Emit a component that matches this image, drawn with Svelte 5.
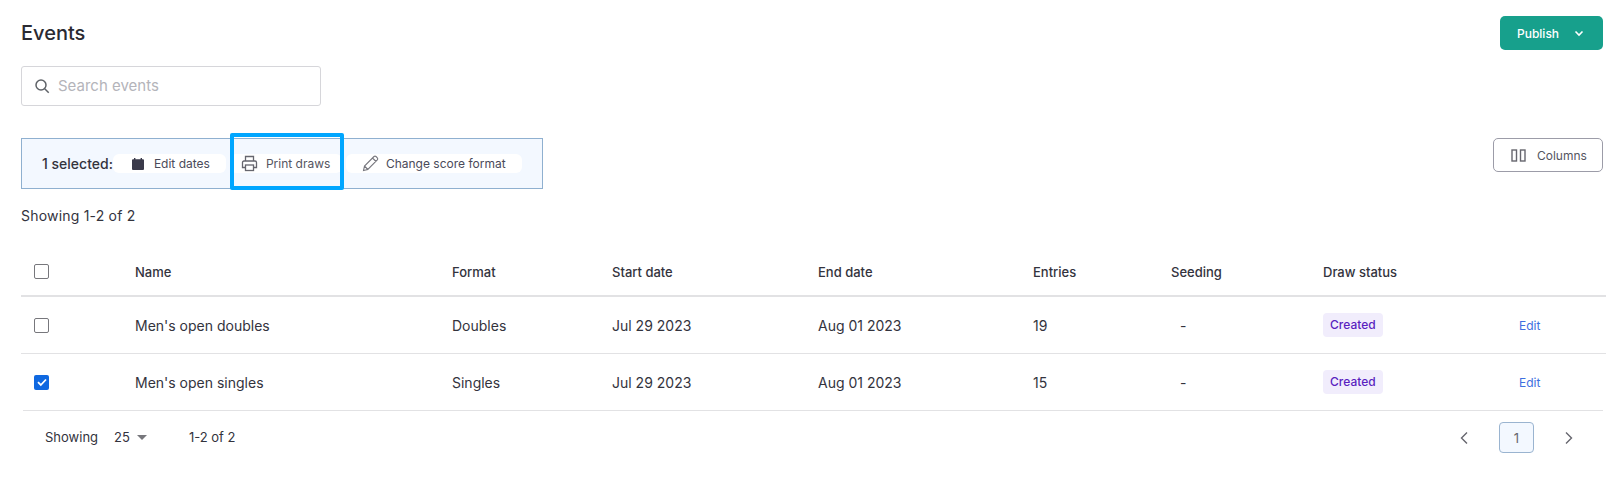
<script lang="ts">
	const rows = [
		{ name: "Men's open doubles", format: 'Doubles', start: 'Jul 29 2023', end: 'Aug 01 2023', entries: 19, selected: false },
		{ name: "Men's open singles", format: 'Singles', start: 'Jul 29 2023', end: 'Aug 01 2023', entries: 15, selected: true }
	];
	const headers = ['Name', 'Format', 'Start date', 'End date', 'Entries', 'Seeding', 'Draw status', ''];
</script>

<div class="page">
	<header class="top">
		<h1>Events</h1>
		<button class="publish">
			<span>Publish</span>
			<svg width="12" height="12" viewBox="0 0 12 12" fill="none" stroke="#fff" stroke-width="1.6"><path d="M2.5 4.5 6 8l3.5-3.5" /></svg>
		</button>
	</header>

	<div class="search">
		<svg width="16" height="16" viewBox="0 0 16 16" fill="none" stroke="#5f6368" stroke-width="1.5"><circle cx="7" cy="7" r="5" /><path d="m10.7 10.7 4 4" /></svg>
		<span>Search events</span>
	</div>

	<div class="toolbar">
		<div class="bulk">
			<strong>1 selected:</strong>
			<button class="action dates">
				<svg width="14" height="14" viewBox="0 0 14 14" fill="#3a3a4a"><path d="M1 3.2q0-1 1-1h1V1h1.4v1.2h5.2V1H11v1.2h1q1 0 1 1V12q0 1-1 1H2q-1 0-1-1z" /></svg>
				Edit dates
			</button>
			<button class="action print">
				<svg width="17" height="17" viewBox="0 0 17 17" fill="none" stroke="#66666e" stroke-width="1.3"><path d="M4.5 6V1.5h8V6M4.5 12.5h-3V7.500q0-1.500 1.500-1.500h11q1.500 0 1.500 1.500v5h-3" /><rect x="4.5" y="10" width="8" height="5.500" /></svg>
				Print draws
			</button>
			<button class="action score">
				<svg width="17" height="17" viewBox="0 0 17 17" fill="none" stroke="#77777e" stroke-width="1.1"><path d="M1.500 15.500 2.500 11 12 1.500q1-.8 2 0l1.300 1.300q.8 1 0 2L5.800 14.500zM10.500 3l3.500 3.500M2.500 11l3.300 3.500" /></svg>
				Change score format
			</button>
			<div class="highlight"></div>
		</div>
		<button class="columns">
			<svg width="15" height="13" viewBox="0 0 15 13" fill="none" stroke="#66666e" stroke-width="1.4"><rect x="1" y="1" width="4.500" height="11" /><rect x="9.500" y="1" width="4.500" height="11" /></svg>
			Columns
		</button>
	</div>

	<p class="count">Showing 1-2 of 2</p>

	<div class="table">
		<div class="row head">
			<span class="cell-check"><span class="box"></span></span>
			{#each headers as h}
				<span>{h}</span>
			{/each}
		</div>
		{#each rows as r}
			<div class="row body">
				<span class="cell-check">
					{#if r.selected}
						<span class="box checked">
							<svg width="12" height="12" viewBox="0 0 12 12" fill="none" stroke="#fff" stroke-width="1.8"><path d="m2 6.200 2.800 2.800L10 3.500" /></svg>
						</span>
					{:else}
						<span class="box"></span>
					{/if}
				</span>
				<span>{r.name}</span>
				<span>{r.format}</span>
				<span>{r.start}</span>
				<span>{r.end}</span>
				<span>{r.entries}</span>
				<span class="dash">-</span>
				<span><span class="badge">Created</span></span>
				<span class="edit">Edit</span>
			</div>
		{/each}
	</div>

	<footer class="pager">
		<div class="per-page">
			<span>Showing</span>
			<span class="size">25</span>
			<span class="caret"></span>
			<span class="range">1-2 of 2</span>
		</div>
		<div class="pages">
			<svg width="12" height="14" viewBox="0 0 12 14" fill="none" stroke="#66666e" stroke-width="1.4"><path d="M9 1.500 3.500 7 9 12.500" /></svg>
			<span class="page-num">1</span>
			<svg width="12" height="14" viewBox="0 0 12 14" fill="none" stroke="#66666e" stroke-width="1.4"><path d="M3 1.500 8.500 7 3 12.500" /></svg>
		</div>
	</footer>
</div>

<style>
	:global(body) {
		margin: 0;
		background: #fff;
	}

	.page {
		width: 1606px;
		height: 477px;
		overflow: hidden;
		box-sizing: border-box;
		padding: 16px 3px 0 21px;
		font-family: Inter, 'Liberation Sans', sans-serif;
		color: #33333d;
	}

	button {
		font: inherit;
		cursor: pointer;
	}

	.top {
		display: flex;
		justify-content: space-between;
		align-items: flex-start;
		height: 50px;
	}

	h1 {
		margin: 3px 0 0;
		font-size: 20px;
		line-height: 28px;
		font-weight: 500;
		color: #2a2a32;
	}

	.publish {
		width: 103px;
		height: 34px;
		display: flex;
		align-items: center;
		gap: 14px;
		padding: 0 0 0 17px;
		border: none;
		border-radius: 5px;
		background: #17a08c;
		color: #fff;
		font-size: 12px;
		font-weight: 500;
	}

	.search {
		width: 300px;
		height: 40px;
		box-sizing: border-box;
		display: flex;
		align-items: center;
		gap: 8px;
		padding: 0 0 1px 12px;
		border: 1px solid #d6d6da;
		border-radius: 3px;
		font-size: 15px;
		color: #b4b4ba;
	}

	.toolbar {
		display: flex;
		justify-content: space-between;
		align-items: flex-start;
		margin-top: 32px;
	}

	.bulk {
		position: relative;
		width: 522px;
		height: 51px;
		box-sizing: border-box;
		display: flex;
		align-items: center;
		padding-left: 20px;
		border: 1px solid #8fb0d0;
		background: #f3f8ff;
		font-size: 12px;
	}

	.bulk strong {
		font-size: 14px;
		font-weight: 500;
		color: #33333d;
	}

	.action {
		height: 19px;
		display: flex;
		align-items: center;
		border: none;
		border-radius: 6px;
		background: #fff;
		padding: 0;
		font-size: 12px;
		color: #4a4a5a;
	}

	.dates {
		width: 113px;
		gap: 9px;
		padding-left: 18px;
	}

	.print {
		width: 112px;
		margin-left: 4px;
		gap: 8px;
		padding-left: 11px;
		color: #55555f;
	}

	.score {
		width: 176px;
		margin-left: 4px;
		gap: 7px;
		padding-left: 16px;
	}

	.highlight {
		position: absolute;
		left: 208px;
		top: -6px;
		width: 114px;
		height: 57px;
		box-sizing: border-box;
		border: 4px solid #00a6ff;
		border-radius: 2px;
	}

	.columns {
		width: 110px;
		height: 34px;
		display: flex;
		align-items: center;
		gap: 11px;
		padding: 0 0 0 17px;
		border: 1px solid #9c9ca8;
		border-radius: 5px;
		background: #fff;
		font-size: 12px;
		color: #55555f;
	}

	.count {
		margin: 19px 0 0;
		font-size: 14px;
		letter-spacing: 0.2px;
		line-height: 16px;
		color: #33333d;
	}

	.table {
		margin-top: 24px;
		margin-right: -3px;
	}

	.row {
		display: grid;
		grid-template-columns: 114px 317px 160px 206px 215px 138px 152px 197px 1fr;
		align-items: center;
		font-size: 14px;
		box-sizing: border-box;
	}

	.head {
		height: 49px;
		border-bottom: 2px solid #e2e2e4;
		font-size: 13px;
		font-weight: 500;
	}

	.body {
		height: 57px;
		border-bottom: 1px solid #e2e2e4;
	}

	.body:last-child {
		border-bottom-color: transparent;
	}

	.cell-check {
		display: flex;
		padding-left: 13px;
	}

	.box {
		width: 15px;
		height: 15px;
		box-sizing: border-box;
		display: flex;
		align-items: center;
		justify-content: center;
		border: 1.500px solid #77777c;
		border-radius: 2px;
	}

	.box.checked {
		border: none;
		background: #0f68e0;
	}

	.dash {
		padding-left: 9px;
	}

	.badge {
		display: inline-block;
		padding: 0 7px;
		height: 24px;
		line-height: 24px;
		border-radius: 4px;
		background: #f1edfc;
		color: #5a1fc0;
		font-size: 12px;
		font-weight: 500;
	}

	.edit {
		margin-left: -1px;
		color: #3e6fe0;
		font-size: 12px;
	}

	.pager {
		display: flex;
		justify-content: space-between;
		align-items: center;
		height: 52px;
		margin: -1px 0 0 2px;
		padding-left: 22px;
		border-top: 1px solid #e2e2e4;
		font-size: 13px;
	}

	.per-page {
		display: flex;
		align-items: center;
	}

	.size {
		margin-left: 16px;
	}

	.caret {
		margin-left: 7px;
		border-left: 5px solid transparent;
		border-right: 5px solid transparent;
		border-top: 5px solid #77777c;
	}

	.range {
		margin-left: 42px;
	}

	.pages {
		display: flex;
		align-items: center;
		gap: 29px;
		margin-right: 28px;
		margin-top: 1px;
	}

	.page-num {
		width: 35px;
		height: 31px;
		box-sizing: border-box;
		display: flex;
		align-items: center;
		justify-content: center;
		border: 1px solid #9ab4d0;
		border-radius: 4px;
		background: #f3f8ff;
		color: #66666e;
	}
</style>
